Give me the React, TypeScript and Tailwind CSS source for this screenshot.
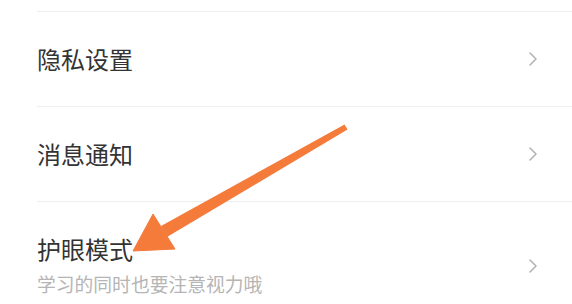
const Chevron = () => (
  <svg width="10" height="16" viewBox="0 0 10 16" className="shrink-0">
    <polyline points="2,2 8,8 2,14" fill="none" stroke="#b4b4b4" strokeWidth="1.6" strokeLinecap="round" strokeLinejoin="round" />
  </svg>
);

const Row = ({ title }: { title: string }) => (
  <div className="border-t border-[#efefef] ml-[37px] pr-[34px] flex items-center justify-between h-[95px]">
    <span className="text-[24px] leading-[32px] text-[#333333]">{title}</span>
    <Chevron />
  </div>
);

export default function App() {
  return (
    <div
      className="relative w-[572px] h-[304px] overflow-hidden bg-white pt-[11px]"
      style={{ fontFamily: '"Noto Sans CJK SC", "Noto Sans", sans-serif' }}
    >
      <Row title="隐私设置" />
      <Row title="消息通知" />
      <div className="border-t border-[#efefef] ml-[37px] pr-[34px] flex items-start justify-between h-[120px] pt-[31px]">
        <div className="flex flex-col">
          <span className="text-[24px] leading-[32px] text-[#333333]">护眼模式</span>
          <span className="text-[18.8px] leading-[26px] mt-[6px] text-[#b5b5b5]">学习的同时也要注意视力哦</span>
        </div>
        <div className="mt-[25px]">
          <Chevron />
        </div>
      </div>
      {/* orange pointer arrow */}
      <svg className="absolute left-0 top-0" width="572" height="304" viewBox="0 0 572 304">
        <polygon points="347.5,129.5 344.5,124.5 161,226 167,237" fill="#f47b3a" />
        <polygon points="153,214 133,251 175,249" fill="#f47b3a" strokeLinejoin="round" stroke="#f47b3a" strokeWidth="1" />
      </svg>
    </div>
  );
}
